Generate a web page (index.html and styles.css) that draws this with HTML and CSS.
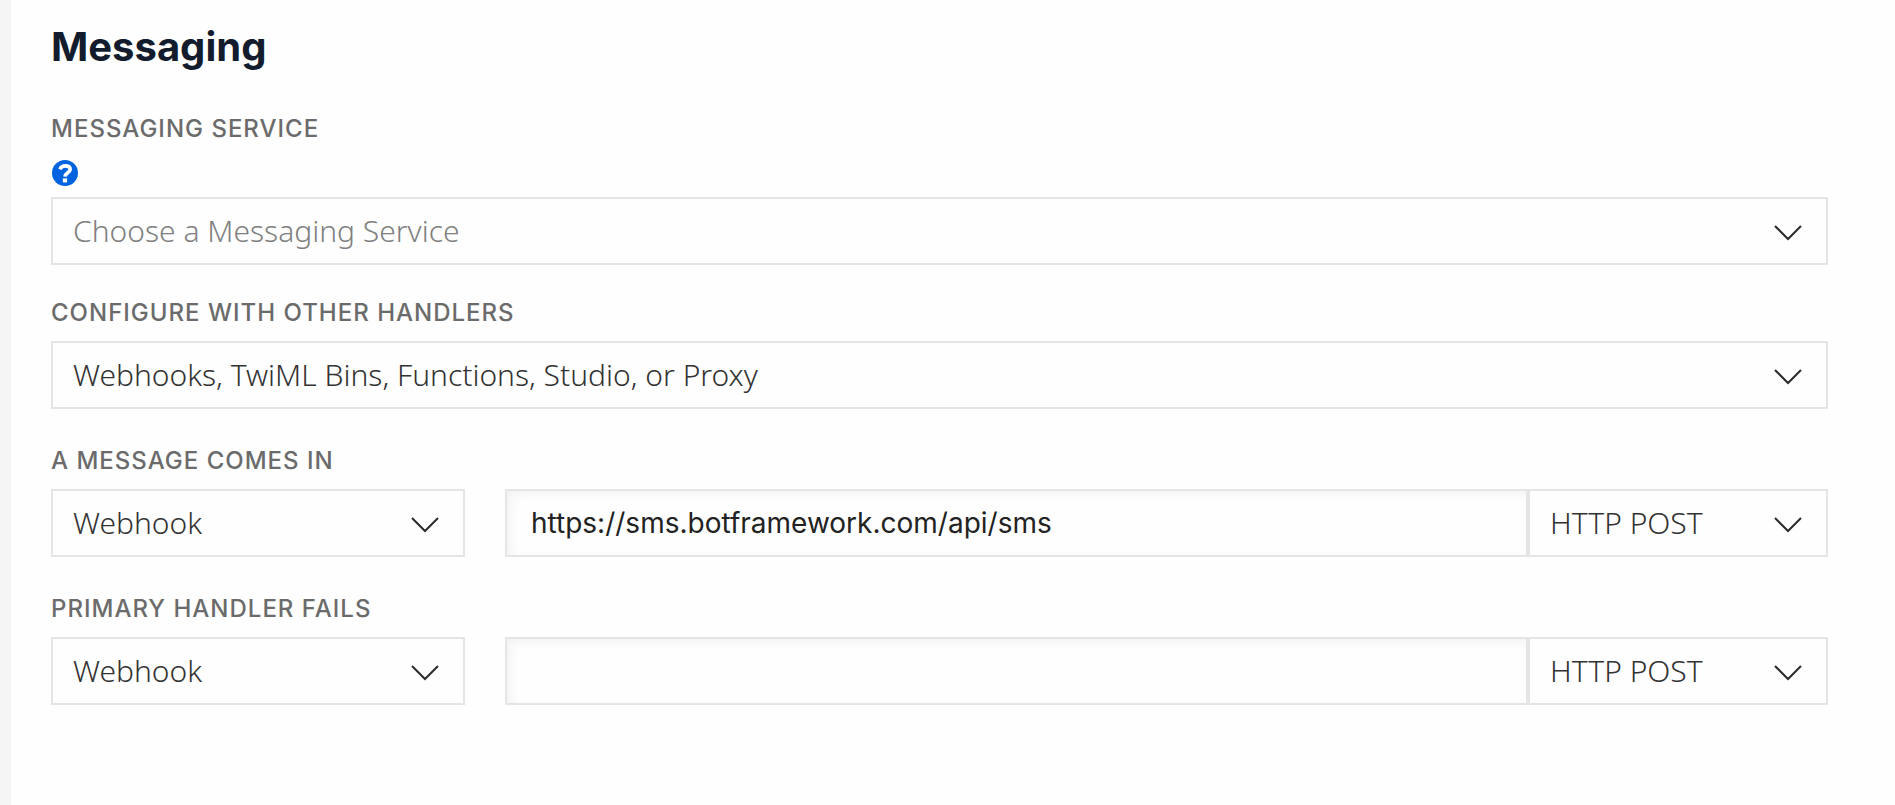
FILE: index.html
```html
<!DOCTYPE html>
<html lang="en">
<head>
<meta charset="utf-8">
<meta name="viewport" content="width=device-width, initial-scale=1">
<title>Messaging</title>
<link rel="stylesheet" href="styles.css">
</head>
<body>
<main class="panel">
  <h1 class="title">Messaging</h1>
  <form class="form">
    <div class="field">
      <label class="label" for="service">MESSAGING SERVICE</label>
      <button class="help" type="button" aria-label="About messaging services">
        <svg viewBox="0 0 26 26" aria-hidden="true"><circle cx="13" cy="13" r="13" fill="#0263e0"/><path d="M8 9.300C8.900 7 10.700 5.900 13.100 5.900C16 5.900 18.200 7.200 18.200 9.500C18.200 12.400 13.300 12.600 13 16.600" fill="none" stroke="#fff" stroke-width="3.600"/><path d="M10.900 18.400h4.200v4h-4.200z" fill="#fff"/></svg>
      </button>
      <div class="select">
        <select id="service" class="box box-empty"><option>Choose a Messaging Service</option></select>
        <svg class="chevron" viewBox="0 0 28 16" aria-hidden="true"><path d="M1 1l13 13L27 1"/></svg>
      </div>
    </div>
    <div class="field">
      <label class="label" for="configure">CONFIGURE WITH OTHER HANDLERS</label>
      <div class="select">
        <select id="configure" class="box"><option>Webhooks, TwiML Bins, Functions, Studio, or Proxy</option></select>
        <svg class="chevron" viewBox="0 0 28 16" aria-hidden="true"><path d="M1 1l13 13L27 1"/></svg>
      </div>
    </div>
    <div class="field field-handler">
      <label class="label" for="incoming">A MESSAGE COMES IN</label>
      <div class="row">
        <div class="select handler">
          <select id="incoming" class="box"><option>Webhook</option></select>
          <svg class="chevron" viewBox="0 0 28 16" aria-hidden="true"><path d="M1 1l13 13L27 1"/></svg>
        </div>
        <div class="target">
          <input class="box url" type="text" aria-label="Incoming message URL" value="https://sms.botframework.com/api/sms">
          <div class="select method">
            <select class="box" aria-label="Incoming message method"><option>HTTP POST</option></select>
            <svg class="chevron" viewBox="0 0 28 16" aria-hidden="true"><path d="M1 1l13 13L27 1"/></svg>
          </div>
        </div>
      </div>
    </div>
    <div class="field field-handler">
      <label class="label" for="fallback">PRIMARY HANDLER FAILS</label>
      <div class="row">
        <div class="select handler">
          <select id="fallback" class="box"><option>Webhook</option></select>
          <svg class="chevron" viewBox="0 0 28 16" aria-hidden="true"><path d="M1 1l13 13L27 1"/></svg>
        </div>
        <div class="target">
          <input class="box url" type="text" aria-label="Fallback URL">
          <div class="select method">
            <select class="box" aria-label="Fallback method"><option>HTTP POST</option></select>
            <svg class="chevron" viewBox="0 0 28 16" aria-hidden="true"><path d="M1 1l13 13L27 1"/></svg>
          </div>
        </div>
      </div>
    </div>
  </form>
</main>
</body>
</html>
```

FILE: styles.css
```css
* {
  box-sizing: border-box;
}

body {
  margin: 0;
  background: #fefefe;
  font-family: Inter, "Liberation Sans", sans-serif;
}

.panel {
  min-height: 100vh;
  border-left: 11px solid #f5f5f5;
  padding: 23px 67px 40px 40px;
}

.title {
  margin: 0 0 42px;
  font-size: 40px;
  line-height: 48px;
  font-weight: 700;
  color: #121c2d;
}

.form {
  display: flex;
  flex-direction: column;
}

.field + .field {
  margin-top: 32px;
}

.field + .field-handler {
  margin-top: 36px;
}

.label {
  display: block;
  margin-bottom: 12px;
  font-size: 24px;
  line-height: 32px;
  font-weight: 500;
  letter-spacing: 1px;
  color: #6b6b6b;
}

.help {
  display: block;
  width: 26px;
  height: 26px;
  margin: 15px 0 11px 1px;
  padding: 0;
  border: 0;
  background: none;
}

.help svg {
  display: block;
}

.select {
  position: relative;
}

.box {
  display: block;
  width: 100%;
  height: 68px;
  margin: 0;
  padding: 0 64px 2px 20px;
  border: 2px solid #e5e5e5;
  border-radius: 0;
  appearance: none;
  background: #fefefe;
  font-family: "Noto Sans", sans-serif;
  font-size: 30px;
  font-weight: 300;
  color: #333;
}

.box-empty {
  color: #808080;
}

.chevron {
  position: absolute;
  top: 28px;
  right: 26px;
  width: 28px;
  height: 16px;
  fill: none;
  stroke: #2b2b2b;
  stroke-width: 2;
  pointer-events: none;
}

.row {
  display: flex;
  gap: 40px;
}

.handler {
  flex: 0 0 414px;
}

.target {
  display: flex;
  flex: 1;
  min-width: 0;
}

.url {
  flex: 1;
  min-width: 0;
  padding: 0 24px;
  font-family: Inter, sans-serif;
  font-size: 28px;
  font-weight: 400;
  color: #222;
  box-shadow: inset 4px 4px 10px #f3f3f3;
}

.method {
  flex: 0 0 300px;
}
```
